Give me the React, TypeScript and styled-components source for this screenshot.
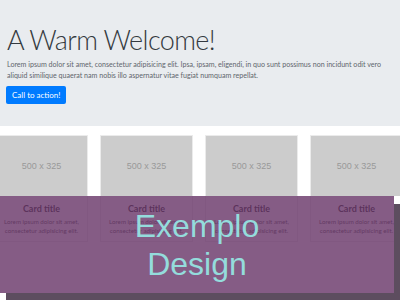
import React from 'react';
import styled, { createGlobalStyle } from 'styled-components';

const GlobalStyle = createGlobalStyle`
  html, body {
    margin: 0;
    padding: 0;
    background: #fff;
  }
  body {
    font-family: Lato, "Open Sans", sans-serif;
    color: #212529;
  }
`;

const Page = styled.div`
  position: relative;
  width: 400px;
  height: 300px;
  overflow: hidden;
  background: #fff;
`;

const Jumbotron = styled.div`
  background: #e9ecef;
  height: 126px;
  box-sizing: border-box;
  padding: 23px 7px 0;
`;

const Heading = styled.h1`
  margin: 0;
  font-family: Lato, sans-serif;
  font-weight: 300;
  font-size: 27px;
  letter-spacing: -0.6px;
  line-height: 34px;
  color: #343a40;
`;

const Lead = styled.p`
  margin: 3px 0 0;
  font-size: 7.1px;
  line-height: 10.5px;
  color: #5f666d;
`;

const ActionButton = styled.button`
  margin-top: 5px;
  margin-left: -1px;
  height: 18px;
  padding: 0 6px;
  border: none;
  border-radius: 2px;
  background: #007bff;
  color: #fff;
  font-family: Lato, sans-serif;
  font-size: 8px;
`;

const CardRow = styled.div`
  display: flex;
  gap: 12px;
  margin: 9px 0 0 -5px;
`;

const Card = styled.div`
  flex: 0 0 93px;
  border: 1px solid rgba(0, 0, 0, 0.08);
  box-sizing: border-box;
`;

const Thumb = styled.div`
  height: 60px;
  background: #cccccc;
  display: flex;
  align-items: center;
  justify-content: center;
  font-family: "Liberation Sans", Arial, sans-serif;
  font-size: 9px;
  color: #999;
`;

const CardBody = styled.div`
  padding: 7px 3px 6px;
  text-align: center;
`;

const CardTitle = styled.div`
  font-weight: 700;
  font-size: 9px;
  line-height: 12px;
  color: #333;
`;

const CardText = styled.div`
  margin-top: 2px;
  font-size: 6.2px;
  line-height: 9px;
  color: #555;
`;

const Overlay = styled.div`
  position: absolute;
  left: 0;
  top: 196px;
  width: 394px;
  height: 97px;
  background: rgba(102, 51, 102, 0.8);
  box-shadow: 6px 8px 0 #5d4d5f;
  display: flex;
  align-items: center;
  justify-content: center;
  text-align: center;
  font-family: "Liberation Sans", Arial, sans-serif;
  font-size: 32px;
  line-height: 38px;
  color: #94dcdc;
`;

const cards = [1, 2, 3, 4];

export default function App() {
  return (
    <Page>
      <GlobalStyle />
      <Jumbotron>
        <Heading>A Warm Welcome!</Heading>
        <Lead>
          Lorem ipsum dolor sit amet, consectetur adipisicing elit. Ipsa, ipsam, eligendi, in quo sunt possimus non
          incidunt odit vero aliquid similique quaerat nam nobis illo aspernatur vitae fugiat numquam repellat.
        </Lead>
        <ActionButton>Call to action!</ActionButton>
      </Jumbotron>
      <CardRow>
        {cards.map((n) => (
          <Card key={n}>
            <Thumb>500 x 325</Thumb>
            <CardBody>
              <CardTitle>Card title</CardTitle>
              <CardText>Lorem ipsum dolor sit amet, consectetur adipisicing elit.</CardText>
            </CardBody>
          </Card>
        ))}
      </CardRow>
      <Overlay>
        Exemplo
        <br />
        Design
      </Overlay>
    </Page>
  );
}
